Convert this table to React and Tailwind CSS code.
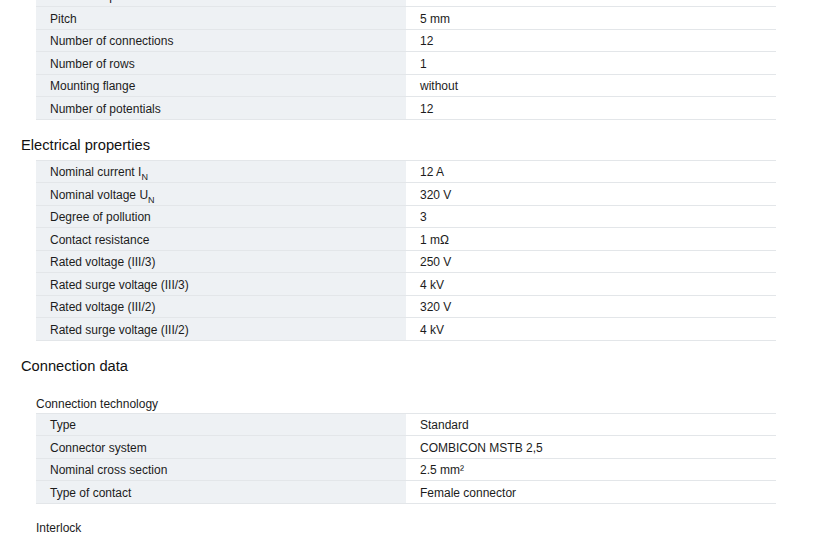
import React from "react";

const N = () => <sub className="text-[9px] relative top-[1px] align-sub leading-none">N</sub>;

function Row({ r }) {
  return (
    <div className="grid grid-cols-2 h-[22.5px] border-b border-[#e3e6e9]">
      <div className="bg-[#eef1f4] pl-[14px] pt-[2px] flex items-center">{r[0]}</div>
      <div className="bg-white pl-[14px] pt-[2px] flex items-center">{r[1]}</div>
    </div>
  );
}

function Table({ rows }) {
  return (
    <div className="ml-[15px] w-[740px] border-t border-[#e3e6e9]">
      {rows.map((r, i) => (
        <Row key={i} r={r} />
      ))}
    </div>
  );
}

function Heading({ children }) {
  return (
    <div className="mt-[15px] mb-[5px] h-[20px] leading-[20px] text-[14.7px] text-[#111]">{children}</div>
  );
}

function Sub({ children, first }) {
  return (
    <div className={`ml-[15px] h-[18px] leading-[18px] ${first ? "mt-[19px]" : "mt-[15px]"}`}>{children}</div>
  );
}

export default function App() {
  return (
    <div
      className="w-[830px] h-[534px] overflow-hidden bg-white text-[12px] text-[#1c1c1c]"
      style={{ fontFamily: '"Liberation Sans", Arial, sans-serif' }}
    >
      <div className="pl-[21px] -mt-[15.5px]">
        <div className="ml-[15px] w-[740px]">
          {[
            ["Number of positions", "12"],
            ["Pitch", "5 mm"],
            ["Number of connections", "12"],
            ["Number of rows", "1"],
            ["Mounting flange", "without"],
            ["Number of potentials", "12"],
          ].map((r, i) => (
            <Row key={i} r={r} />
          ))}
        </div>
        <Heading>Electrical properties</Heading>
        <Table
          rows={[
            [<span>Nominal current I<N /></span>, "12 A"],
            [<span>Nominal voltage U<N /></span>, "320 V"],
            ["Degree of pollution", "3"],
            ["Contact resistance", "1 mΩ"],
            ["Rated voltage (III/3)", "250 V"],
            ["Rated surge voltage (III/3)", "4 kV"],
            ["Rated voltage (III/2)", "320 V"],
            ["Rated surge voltage (III/2)", "4 kV"],
          ]}
        />
        <Heading>Connection data</Heading>
        <Sub first>Connection technology</Sub>
        <Table
          rows={[
            ["Type", "Standard"],
            ["Connector system", "COMBICON MSTB 2,5"],
            ["Nominal cross section", "2.5 mm²"],
            ["Type of contact", "Female connector"],
          ]}
        />
        <Sub>Interlock</Sub>
      </div>
    </div>
  );
}
